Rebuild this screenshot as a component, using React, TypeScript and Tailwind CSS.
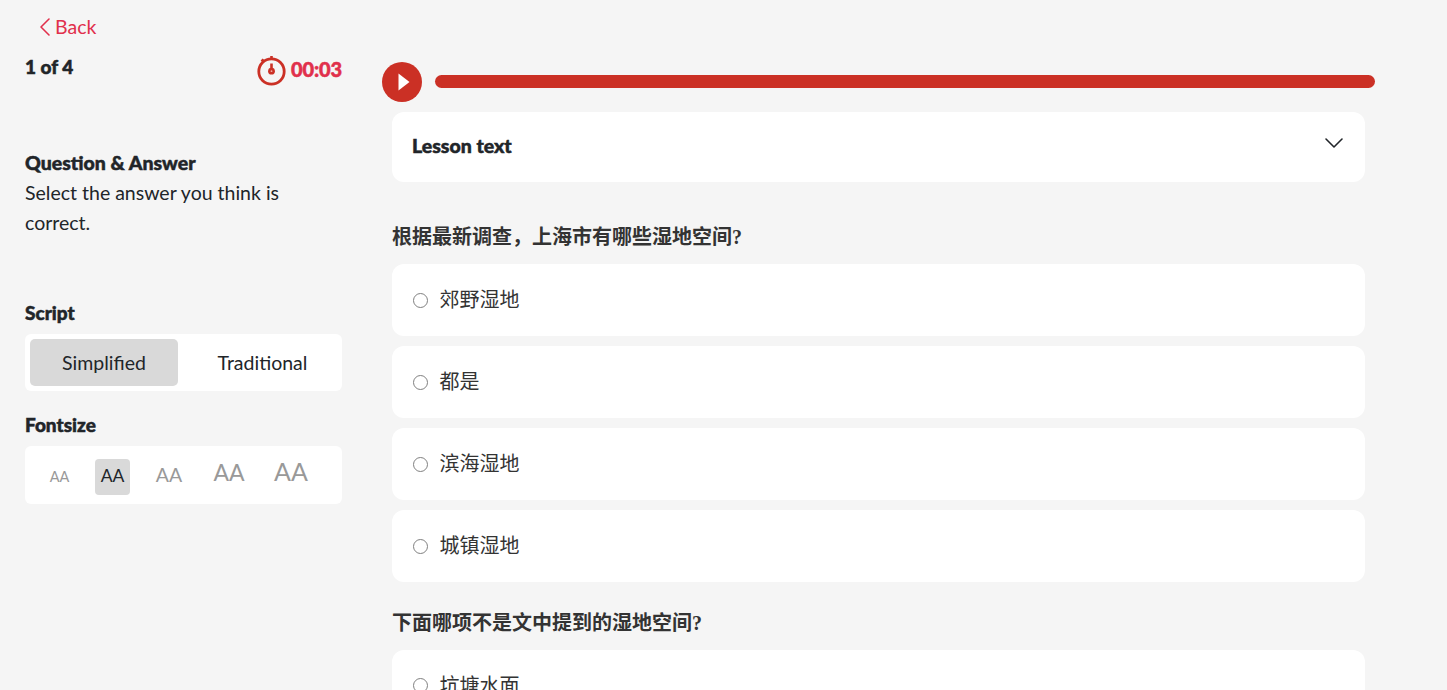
import { ChevronDown, ChevronLeft } from "lucide-react";

const cjk = "font-['Liberation_Serif','Noto_Sans_CJK_SC',serif]";
const heavy = "font-black [-webkit-text-stroke:0.5px_currentColor]";

const questions = [
  {
    title: "根据最新调查\uFF0C上海市有哪些湿地空间?",
    options: ["郊野湿地", "都是", "滨海湿地", "城镇湿地"],
  },
  {
    title: "下面哪项不是文中提到的湿地空间?",
    options: ["坑塘水面"],
  },
];

const fontSizes = [
  { cls: "ml-[17px] text-[14.5px]" },
  { cls: "ml-[18px] text-[17.5px]", active: true },
  { cls: "ml-[21.5px] text-[19.5px]" },
  { cls: "ml-[25px] text-[23px]" },
  { cls: "ml-[27px] text-[25px]" },
];

function Stopwatch() {
  return (
    <svg width="29" height="30" viewBox="0 0 29 30" fill="none" stroke="#cb3025">
      <circle cx="14.5" cy="15.5" r="12.7" strokeWidth="2.8" />
      <path d="M14.5 0v3" strokeWidth="2.6" />
      <path d="M6.5 3.2 4.5 5.4" strokeWidth="2.4" />
      <path d="M14.5 7.5v7" strokeWidth="2.6" />
      <circle cx="14.5" cy="15.2" r="3.4" fill="#cb3025" strokeWidth="0" />
      <circle cx="14.5" cy="15.2" r="0.9" fill="#f0a9a3" strokeWidth="0" />
    </svg>
  );
}

export default function App() {
  return (
    <div className="h-[690px] overflow-hidden bg-[#f5f5f5] font-['Lato',sans-serif] text-[#212529]">
      <div className="flex">
        <aside className="ml-[25px] w-[317px] shrink-0">
          <div className="flex h-[54px] items-center pl-[3.5px] text-[19.5px] text-[#e1304c]">
            <ChevronLeft size={32} strokeWidth={1.2} className="-mr-[5.5px]" />
            <span>Back</span>
          </div>
          <div className="flex h-[26px] items-start justify-between">
            <div className={`text-[19px] leading-[26px] ${heavy}`}>1 of 4</div>
            <div className="mt-[2px] flex items-center gap-[5px] text-[#e1304c]">
              <Stopwatch />
              <span className={`-mt-[4px] text-[20px] tracking-[-0.1px] ${heavy}`}>00:03</span>
            </div>
          </div>

          <h2 className={`mt-[68px] text-[19.5px] leading-[30px] ${heavy}`}>Question &amp; Answer</h2>
          <p className="text-[19.5px] leading-[30px]">
            Select the answer you think is
            <br />
            correct.
          </p>

          <h3 className={`mt-[60px] text-[19px] leading-[30px] ${heavy}`}>Script</h3>
          <div className="mt-[6px] flex h-[57px] items-stretch rounded-[6px] bg-white p-[5px] text-[19.5px]">
            <div className="flex w-[148px] items-center justify-center rounded-[5px] bg-[#d9d9d9]">Simplified</div>
            <div className="flex flex-1 items-center justify-center pl-[10px]">Traditional</div>
          </div>

          <h3 className={`mt-[19px] text-[19px] leading-[30px] ${heavy}`}>Fontsize</h3>
          <div className="mt-[6px] flex h-[58px] items-start rounded-[6px] bg-white pt-[13px]">
            {fontSizes.map((s, i) => (
              <div
                key={i}
                className={`flex h-[36px] w-[35px] items-end justify-center whitespace-nowrap rounded-[4px] pb-[11px] leading-none ${s.cls} ${
                  s.active ? "bg-[#d9d9d9] text-[#212529]" : "text-[#999]"
                }`}
              >
                AA
              </div>
            ))}
          </div>
        </aside>

        <main className="ml-[40px] w-[993px] shrink-0 pt-[62px]">
          <div className="flex items-center gap-[13px]">
            <button className="flex h-[40px] w-[40px] items-center justify-center rounded-full bg-[#cb3025]">
              <svg width="12" height="18" viewBox="0 0 12 18" className="ml-[3px]">
                <path d="M0.5 0.5 11.5 9 0.5 17.5Z" fill="#fff" />
              </svg>
            </button>
            <div className="mb-[1px] h-[13px] w-[940px] rounded-full bg-[#cb3025]" />
          </div>

          <div className="ml-[10px] w-[973px]">
            <div className="mt-[10px] flex h-[70px] items-center justify-between rounded-[12px] bg-white pl-[20px] pr-[15px]">
              <span className={`pb-[2px] text-[19.5px] ${heavy}`}>Lesson text</span>
              <ChevronDown size={32} strokeWidth={1.2} className="-mt-[8px]" />
            </div>

            <div className="mt-[40px] flex flex-col gap-[25.6px]">
              {questions.map((q) => (
                <section key={q.title}>
                  <h4 className={`${cjk} text-[20px] font-bold leading-[30px] text-[#333]`}>{q.title}</h4>
                  <div className="mt-[12px] flex flex-col gap-[10px]">
                    {q.options.map((opt) => (
                      <label key={opt} className="flex h-[72px] items-center rounded-[12px] bg-white pl-[21px]">
                        <input
                          type="radio"
                          name={q.title}
                          className="m-0 h-[15px] w-[15px] appearance-none rounded-full border-[1.5px] border-[#808080] bg-white"
                        />
                        <span className={`${cjk} ml-[11.5px] text-[20px] text-[#333]`}>{opt}</span>
                      </label>
                    ))}
                  </div>
                </section>
              ))}
            </div>
          </div>
        </main>
      </div>
    </div>
  );
}
